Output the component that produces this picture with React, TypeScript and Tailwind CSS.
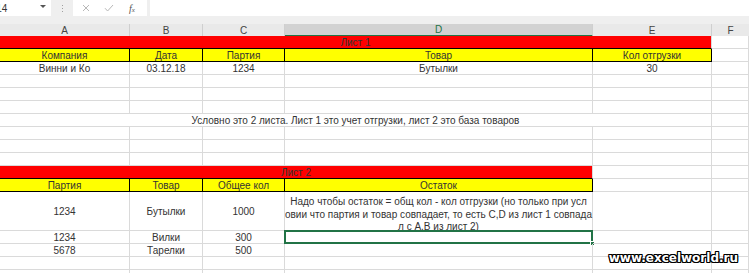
import React from "react";

const G = "border-[#dadada]";

function Cell({
  className = "",
  children,
}: {
  className?: string;
  children?: React.ReactNode;
}) {
  return (
    <div
      className={`relative flex items-center justify-center whitespace-nowrap border-r border-b text-[10px] leading-none text-[#333] ${className}`}
    >
      {children}
    </div>
  );
}

function Empty({ n = 1 }: { n?: number }) {
  return (
    <>
      {Array.from({ length: n }).map((_, i) => (
        <Cell key={i} className={G} />
      ))}
    </>
  );
}

function Yellow({ children }: { children?: React.ReactNode }) {
  return (
    <Cell className="border-black bg-[#ffff00] text-[#3a3a1a] pt-[2px]">{children}</Cell>
  );
}

function Data({ children, className = "" }: { children?: React.ReactNode; className?: string }) {
  return <Cell className={`${G} pt-[2px] ${className}`}>{children}</Cell>;
}

export default function App() {
  return (
    <div className="relative h-[273px] w-[749px] overflow-hidden bg-white font-['Liberation_Sans',Arial,sans-serif]">
      {/* formula bar */}
      <div className="flex h-[24px] items-start bg-[#efefef]">
        <div className="relative flex h-[16px] w-[51px] items-center overflow-hidden bg-white">
          <span className="-ml-[11px] text-[10px] text-[#333]">D14</span>
          <span className="absolute right-[5px] top-[5px] h-0 w-0 border-x-[3px] border-t-[3px] border-x-transparent border-t-[#555]" />
        </div>
        <div className="flex h-[16px] w-[22px] flex-col items-center justify-center gap-[2px]">
          <span className="h-[1px] w-[1px] bg-[#a0a0a0]" />
          <span className="h-[1px] w-[1px] bg-[#a0a0a0]" />
          <span className="h-[1px] w-[1px] bg-[#a0a0a0]" />
        </div>
        <div className="flex h-[16px] w-[74px] items-center bg-white">
          <svg className="ml-[9px]" width="8" height="8" viewBox="0 0 8 8">
            <path d="M1 1L7 7M7 1L1 7" stroke="#b8b8b8" strokeWidth="1" fill="none" />
          </svg>
          <svg className="ml-[14px]" width="10" height="8" viewBox="0 0 10 8">
            <path d="M1 4.2L3.6 7L9 1" stroke="#b8b8b8" strokeWidth="1" fill="none" />
          </svg>
          <span className="ml-[15px] font-['Liberation_Serif',serif] text-[10px] italic text-[#555]">
            f<span className="text-[7px]">x</span>
          </span>
        </div>
        <div className="ml-[3px] h-[16px] flex-1 bg-white" />
      </div>

      {/* column headers */}
      <div className="grid h-[12px] grid-cols-[130px_73px_82px_308px_119px_1fr] bg-[#e9e9e9] text-[10px] leading-none text-[#444]">
        <div className="flex items-center justify-center border-r border-[#cfcfcf] pt-[1px]">A</div>
        <div className="flex items-center justify-center border-r border-[#cfcfcf] pt-[1px]">B</div>
        <div className="flex items-center justify-center border-r border-[#cfcfcf] pt-[1px]">C</div>
        <div className="flex items-center justify-center border-r border-b-2 border-r-[#cfcfcf] border-b-[#217346] bg-[#d2d2d2] pt-[1px] text-[#217346]">
          D
        </div>
        <div className="flex items-center justify-center border-r border-[#cfcfcf] pt-[1px]">E</div>
        <div className="flex items-center justify-center pt-[1px]">F</div>
      </div>

      {/* sheet */}
      <div className="grid grid-cols-[130px_73px_82px_308px_119px_1fr] auto-rows-[13px]">
        {/* row 1 */}
        <Cell className="col-span-5 border-b-black border-r-[#dadada] bg-[#ff0000] pt-[2px] text-[#2a0000]">
          Лист 1
        </Cell>
        <Empty />
        {/* row 2 */}
        <Yellow>Компания</Yellow>
        <Yellow>Дата</Yellow>
        <Yellow>Партия</Yellow>
        <Yellow>Товар</Yellow>
        <Yellow>Кол отгрузки</Yellow>
        <Empty />
        {/* row 3 */}
        <Data>Винни и Ко</Data>
        <Data>03.12.18</Data>
        <Data>1234</Data>
        <Data>Бутылки</Data>
        <Data>30</Data>
        <Empty />
        {/* rows 4-6 */}
        <Empty n={18} />
        {/* row 7 */}
        <Cell className={`col-span-5 ${G} pt-[2px]`}>
          Условно это 2 листа. Лист 1 это учет отгрузки, лист 2 это база товаров
        </Cell>
        <Empty />
        {/* rows 8-10 */}
        <Empty n={18} />
        {/* row 11 */}
        <Cell className="col-span-4 border-b-black border-r-[#dadada] bg-[#ff0000] pt-[2px] text-[#2a0000]">
          Лист 2
        </Cell>
        <Empty n={2} />
        {/* row 12 */}
        <Yellow>Партия</Yellow>
        <Yellow>Товар</Yellow>
        <Yellow>Общее кол</Yellow>
        <Yellow>Остаток</Yellow>
        <Empty n={2} />
        {/* row 13 tall */}
        <Data className="row-span-3">1234</Data>
        <Data className="row-span-3">Бутылки</Data>
        <Data className="row-span-3">1000</Data>
        <div className={`row-span-3 flex flex-col items-center border-r border-b ${G} pt-[4px] text-[10px] leading-[12.5px] text-[#333]`}>
          <span className="whitespace-nowrap">Надо чтобы остаток = общ кол - кол отгрузки (но только при усл</span>
          <span className="whitespace-nowrap">овии что партия и товар совпадает, то есть C,D из лист 1 совпада</span>
          <span className="whitespace-nowrap">л с А,В из лист 2)</span>
        </div>
        <Cell className={`row-span-3 ${G}`} />
        <Cell className={`row-span-3 ${G}`} />
        {/* row 14 */}
        <Data>1234</Data>
        <Data>Вилки</Data>
        <Data>300</Data>
        <Cell className={G}>
          <div className="absolute -left-[1px] -top-[1px] -right-[1px] -bottom-[1px] border-2 border-[#217346]" />
          <div className="absolute -bottom-[3px] -right-[3px] h-[5px] w-[5px] border border-white bg-[#217346]" />
        </Cell>
        <Empty n={2} />
        {/* row 15 */}
        <Data>5678</Data>
        <Data>Тарелки</Data>
        <Data>500</Data>
        <Empty n={3} />
        {/* rows 16-17 */}
        <Empty n={12} />
      </div>

      {/* watermark */}
      <div className="absolute right-[11px] top-[252px] font-['DejaVu_Sans',sans-serif] text-[12px] font-bold leading-none text-white [text-shadow:1px_0_0_#000,-1px_0_0_#000,0_1px_0_#000,0_-1px_0_#000,1px_1px_0_#000,-1px_-1px_0_#000,1px_-1px_0_#000,-1px_1px_0_#000]">
        www.excelworld.ru
      </div>
    </div>
  );
}
